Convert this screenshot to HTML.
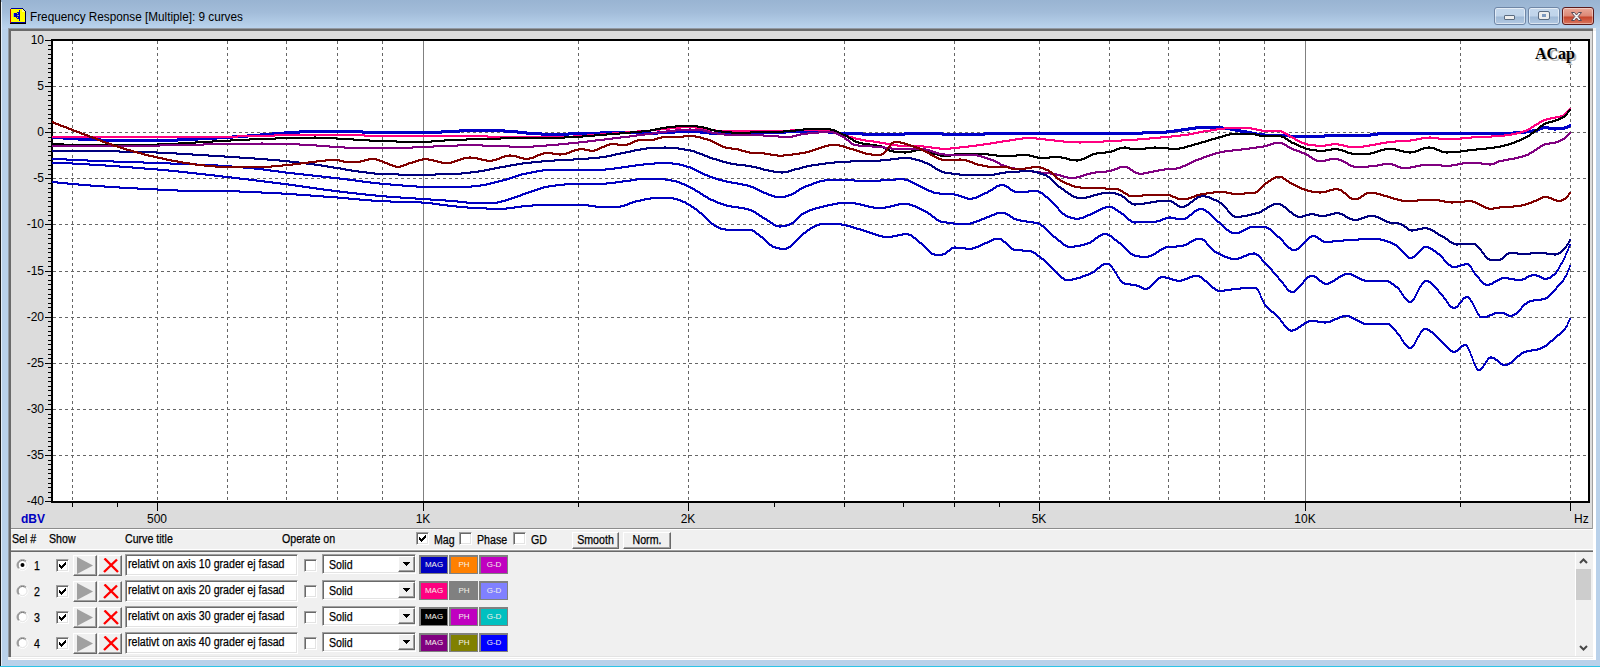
<!DOCTYPE html>
<html>
<head>
<meta charset="utf-8">
<title>Frequency Response</title>
<style>
html,body{margin:0;padding:0;}
body{width:1600px;height:667px;overflow:hidden;position:relative;background:#b9d1ea;font-family:"Liberation Sans",sans-serif;font-size:11px;color:#000;}
.abs{position:absolute;}
#titlebar{left:0;top:0;width:1600px;height:29px;background:linear-gradient(#99b4d2 0px,#a2bcd9 12px,#aec8e3 20px,#bad3ed 28px);}
#title{left:30px;top:10px;font-size:12.5px;line-height:14px;transform:scaleX(0.94);transform-origin:0 0;white-space:nowrap;color:#000;}
#client{left:8px;top:28px;width:1588px;height:632px;background:#f0f0f0;}
#panel{left:11px;top:31px;width:1581px;height:497px;background:#dcdcdc;}
.ylab{position:absolute;left:4px;width:40px;text-align:right;font-size:12px;line-height:12px;}
.xlab{position:absolute;top:513px;font-size:12px;line-height:12px;width:60px;margin-left:-30px;text-align:center;}
.t{position:absolute;white-space:nowrap;font-size:11px;line-height:12px;}
.ms{font-size:12.5px;line-height:12px;transform:scaleX(0.85);transform-origin:0 0;-webkit-text-stroke:0.25px #000;}
.chk{position:absolute;width:11px;height:11px;background:#fff;border:1px solid;border-color:#a0a0a0 #fff #fff #a0a0a0;box-shadow:inset 1px 1px 0 #696969, inset -1px -1px 0 #e3e3e3;}
.chk svg{margin:0}
.btn{position:absolute;box-sizing:border-box;background:#f0f0f0;border:1px solid;border-color:#fff #696969 #696969 #fff;box-shadow:inset -1px -1px 0 #a0a0a0, inset 1px 1px 0 #f0f0f0;}
.btn span{position:absolute;left:0;right:0;top:1px;text-align:center;font-size:12.5px;line-height:12px;transform:scaleX(0.85);-webkit-text-stroke:0.25px #000;}
.edit{position:absolute;box-sizing:border-box;background:#fff;border:1px solid;border-color:#a0a0a0 #fff #fff #a0a0a0;box-shadow:inset 1px 1px 0 #696969, inset -1px -1px 0 #e3e3e3;}
.cb{position:absolute;box-sizing:border-box;width:29px;height:19px;border:solid #808080;border-width:2px 1px 1px 2px;}
.cb span{position:absolute;left:0;right:0;top:2.5px;text-align:center;font-size:8px;line-height:9px;color:#f4f0e8;}
.wb{position:absolute;top:7px;height:18px;box-sizing:border-box;border-radius:3px;}
</style>
</head>
<body>
<div id="titlebar" class="abs"></div>
<div class="abs" style="left:0;top:0;width:1px;height:667px;background:#1a1a1a;"></div>
<div class="abs" style="left:1px;top:2px;width:1px;height:664px;background:#e4eef9;"></div>
<div class="abs" style="left:0;top:666px;width:1600px;height:1px;background:#2ec3e6;"></div>
<svg class="abs" style="left:10px;top:8px" width="16" height="16" viewBox="0 0 16 16" shape-rendering="crispEdges">
<path d="M1 1h11l3 3v10H1z" fill="#ffff00"/>
<path d="M0 1h1v14H0z" fill="#c00000"/>
<path d="M1 0h11v1H1z" fill="#0000a0"/>
<path d="M12 0h1v1h1v1h1v1h1v12h-1V4h-1V3h-1V2h-1z" fill="#000040"/>
<path d="M12 1v3h3v-1h-1v-1h-1v-1z" fill="#ffff80"/>
<path d="M1 14h14v1H1z" fill="#0000a0"/>
<path d="M0 15h16v1H0z" fill="#000"/>
<path d="M4 5h2v4H4z" fill="#0000c0"/>
<path d="M3 5h1v4H3z" fill="#b0b0b0"/>
<path d="M6 5l1-1 1-1 1-1h1v11H9l-1-1-1-1-1-1z" fill="#0000c0"/>
<path d="M8 3h1v1H8zM7 5h1v1H7zM7 9h1v1H7zM8 11h1v1H8z" fill="#ffff00"/>
<path d="M7 7h2v1H7z" fill="#9090c0"/>
</svg>
<div id="title" class="abs">Frequency Response [Multiple]: 9 curves</div>
<div class="wb" style="left:1494px;width:32px;border:1px solid #6f86a6;background:linear-gradient(#c4d7ec 0,#c0d4ea 8px,#9fb9d6 9px,#b3c9e2 16px);box-shadow:inset 0 0 0 1px rgba(255,255,255,.55)"><div class="abs" style="left:9px;top:7px;width:9px;height:3px;background:#eee;border:1px solid #5a6b80;border-radius:1px"></div></div>
<div class="wb" style="left:1528px;width:32px;border:1px solid #6f86a6;background:linear-gradient(#c4d7ec 0,#c0d4ea 8px,#9fb9d6 9px,#b3c9e2 16px);box-shadow:inset 0 0 0 1px rgba(255,255,255,.55)"><div class="abs" style="left:10px;top:4px;width:4px;height:3px;background:#7f9bc0;border:solid #eee;border-width:2px 3px 2px 3px;outline:1px solid #5a6b80;border-radius:1px"></div></div>
<div class="wb" style="left:1562px;width:32px;border:1px solid #5c1a1a;background:linear-gradient(#e9a99a 0,#dc8876 8px,#c6452b 9px,#d87660 16px);box-shadow:inset 0 0 0 1px rgba(255,255,255,.4)"><svg width="13" height="11" viewBox="0 0 13 11" style="position:absolute;left:7px;top:2.5px"><path d="M1.5 1.5h3L6.5 4l2-2.5h3L8.2 5.5l3.3 4h-3l-2-2.5-2 2.5h-3l3.3-4z" fill="#f4f4f4" stroke="#5a4a55" stroke-width="1"/></svg></div>
<div id="client" class="abs"></div>
<div class="abs" style="left:8px;top:28px;width:1585px;height:3px;background:linear-gradient(#939aa3 0,#939aa3 1px,#6a6a6a 1px,#6a6a6a 3px);"></div>
<div class="abs" style="left:8px;top:29px;width:3px;height:628px;background:linear-gradient(90deg,#939aa3 0,#939aa3 1px,#6a6a6a 1px,#6a6a6a 3px);"></div>
<div class="abs" style="left:11px;top:656px;width:1585px;height:4px;background:linear-gradient(#e3e3e3 0,#e3e3e3 1px,#fff 1px,#fff 2px,#f0f0f0 2px,#f0f0f0 3px,#fff 3px);"></div>
<div class="abs" style="left:1593px;top:31px;width:3px;height:629px;background:#fff;"></div>
<div id="panel" class="abs"></div>
<svg class="abs" style="left:0;top:0" width="1600" height="530" viewBox="0 0 1600 530" shape-rendering="crispEdges">
<rect x="51" y="39" width="1539" height="464" fill="#000"/>
<rect x="53" y="41" width="1535" height="460" fill="#fff"/>
<path d="M53 86.5H1588M53 132.5H1588M53 178.5H1588M53 224.5H1588M53 271.5H1588M53 317.5H1588M53 363.5H1588M53 409.5H1588M53 455.5H1588" stroke="#666" stroke-width="1" stroke-dasharray="3 3" stroke-dashoffset="0" fill="none"/>
<path d="M72.5 41V501M157.5 41V501M227.5 41V501M286.5 41V501M337.5 41V501M382.5 41V501M578.5 41V501M688.5 41V501M844.5 41V501M954.5 41V501M1039.5 41V501M1109.5 41V501M1168.5 41V501M1219.5 41V501M1264.5 41V501M1460.5 41V501M1570.5 41V501" stroke="#666" stroke-width="1" stroke-dasharray="3 3" stroke-dashoffset="0" fill="none"/>
<path d="M423.5 41V501M1305.5 41V501" stroke="#808080" stroke-width="1" fill="none"/>
<path d="M52 136H64V137H79V138H101V139H177V138H197V137H216V136H232V135H247V134H260V133H272V132H284V131H299V130H363V131H441V130H459V129H505V130H518V131H527V132H542V133H568V132H600V131H638V132H657V131H674V130H701V131H710V132H725V133H738V132H754V131H785V130H829V131H838V132H863V133H904V132H943V133H984V132H1142V131H1166V130H1174V129H1181V128H1188V127H1195V126H1223V127H1231V128H1236V129H1241V130H1247V131H1252V132H1257V133H1265V134H1290V135H1324V134H1370V133H1377V132H1513V131H1525V130H1532V129H1537V128H1539V127H1542V126H1549V127H1564V126H1567V125H1569V124H1571V127H1570V128H1568V129H1565V130H1556V131H1554V130H1548V129H1543V130H1540V131H1538V132H1533V133H1526V134H1514V135H1378V136H1371V137H1325V138H1289V137H1264V136H1256V135H1251V134H1246V133H1240V132H1235V131H1230V130H1222V129H1196V130H1189V131H1182V132H1175V133H1167V134H1143V135H985V136H942V135H905V136H862V135H837V134H828V133H786V134H755V135H739V136H724V135H709V134H700V133H675V134H658V135H637V134H601V135H569V136H541V135H526V134H517V133H504V132H460V133H442V134H362V133H300V134H285V135H273V136H261V137H248V138H233V139H217V140H198V141H178V142H100V141H78V140H63V139H52Z" fill="#0000c8"/>
<path d="M52 136H237V135H274V134H365V135H488V136H573V135H587V134H600V133H612V132H625V131H637V130H650V129H659V128H669V127H680V126H696V127H702V128H708V129H716V130H790V129H804V128H806V129H833V130H836V131H839V132H841V133H843V134H846V135H849V136H853V137H856V138H861V139H866V140H874V141H880V142H886V143H890V144H898V145H924V146H932V147H940V148H950V147H959V146H968V145H976V144H983V143H990V142H996V141H1002V140H1009V139H1015V138H1022V137H1037V138H1046V139H1055V140H1064V141H1103V140H1121V139H1137V138H1149V137H1160V136H1171V135H1180V134H1188V133H1193V132H1198V131H1203V130H1210V129H1216V128H1224V127H1252V128H1257V129H1262V130H1282V131H1284V132H1286V133H1288V134H1289V135H1291V136H1293V137H1295V138H1296V139H1298V140H1300V141H1302V142H1305V143H1308V144H1316V145H1325V144H1331V143H1339V144H1344V145H1348V146H1363V145H1369V144H1375V143H1380V142H1386V141H1395V140H1410V139H1416V138H1421V137H1429V136H1431V137H1439V138H1461V137H1471V136H1491V135H1504V134H1511V133H1516V132H1520V131H1523V130H1526V129H1528V128H1530V127H1531V126H1533V125H1534V124H1536V123H1538V122H1539V121H1541V120H1543V119H1546V118H1550V117H1555V116H1560V115H1563V114H1564V113H1565V112H1566V111H1567V110H1568V109H1569V108H1571V110H1570V111H1569V112H1568V113H1567V114H1566V115H1565V116H1564V117H1561V118H1556V119H1551V120H1547V121H1544V122H1542V123H1540V124H1539V125H1537V126H1535V127H1534V128H1532V129H1531V130H1529V131H1527V132H1524V133H1521V134H1517V135H1512V136H1505V137H1492V138H1472V139H1462V140H1438V139H1422V140H1417V141H1411V142H1396V143H1387V144H1381V145H1376V146H1370V147H1364V148H1347V147H1343V146H1338V145H1332V146H1326V147H1315V146H1307V145H1304V144H1301V143H1299V142H1297V141H1295V140H1294V139H1292V138H1290V137H1288V136H1287V135H1285V134H1283V133H1281V132H1261V131H1256V130H1251V129H1225V130H1217V131H1211V132H1204V133H1199V134H1194V135H1189V136H1181V137H1172V138H1161V139H1150V140H1138V141H1122V142H1104V143H1081V144H1079V143H1063V142H1054V141H1045V140H1036V139H1023V140H1016V141H1010V142H1003V143H997V144H991V145H984V146H977V147H969V148H960V149H951V150H939V149H931V148H923V147H897V146H889V145H885V144H879V143H873V142H865V141H860V140H855V139H852V138H848V137H845V136H842V135H840V134H838V133H835V132H832V131H791V132H715V131H707V130H701V129H695V128H681V129H670V130H660V131H651V132H638V133H626V134H613V135H601V136H588V137H574V138H487V137H364V136H275V137H238V138H52Z" fill="#ff0080"/>
<path d="M52 143H64V144H157V143H178V142H195V141H212V140H230V139H249V138H275V137H314V136H316V137H337V138H354V139H370V140H397V141H431V140H444V139H466V138H500V137H564V136H582V135H594V134H606V133H619V132H630V131H641V130H650V129H655V128H660V127H666V126H675V125H698V126H704V127H708V128H711V129H715V130H722V131H732V132H750V131H783V130H795V129H803V128H831V129H835V130H837V131H839V132H841V133H843V134H846V135H848V136H849V137H851V138H853V139H854V140H856V141H859V142H863V143H870V144H877V145H882V146H884V147H886V148H888V149H890V150H894V151H911V150H915V149H925V150H928V151H931V152H934V153H938V154H941V155H950V154H954V153H989V154H997V155H1016V154H1030V155H1034V156H1038V157H1049V156H1062V157H1067V158H1070V159H1081V158H1084V157H1086V156H1088V155H1090V154H1092V153H1096V152H1105V151H1111V150H1114V149H1116V148H1119V147H1124V146H1126V147H1130V148H1145V147H1154V146H1156V147H1169V148H1179V147H1184V146H1187V145H1191V144H1194V143H1198V142H1201V141H1205V140H1208V139H1211V138H1215V137H1218V136H1222V135H1225V134H1229V133H1256V134H1260V135H1282V136H1285V137H1286V138H1288V139H1289V140H1291V141H1292V142H1295V143H1297V144H1299V145H1301V146H1304V147H1306V148H1310V149H1317V150H1325V149H1331V148H1339V149H1343V150H1346V151H1348V152H1352V153H1370V152H1374V151H1377V150H1380V149H1384V148H1396V149H1400V150H1404V151H1415V150H1418V149H1420V148H1423V147H1428V146H1430V147H1435V148H1437V149H1440V150H1442V151H1460V150H1467V149H1476V148H1486V147H1494V146H1500V145H1504V144H1508V143H1511V142H1514V141H1516V140H1519V139H1521V138H1523V137H1525V136H1527V135H1529V134H1530V133H1531V132H1533V131H1534V130H1535V129H1537V128H1538V127H1539V126H1540V125H1542V124H1543V123H1545V122H1548V121H1552V120H1555V119H1558V118H1560V117H1562V116H1564V115H1565V114H1566V113H1567V111H1568V110H1569V109H1571V111H1570V112H1569V113H1568V115H1567V116H1566V117H1565V118H1563V119H1561V120H1559V121H1556V122H1553V123H1549V124H1546V125H1544V126H1543V127H1541V128H1540V129H1539V130H1538V131H1536V132H1535V133H1534V134H1532V135H1531V136H1530V137H1528V138H1526V139H1524V140H1522V141H1520V142H1517V143H1515V144H1512V145H1509V146H1505V147H1501V148H1495V149H1487V150H1477V151H1468V152H1461V153H1448V154H1446V153H1441V152H1439V151H1436V150H1434V149H1424V150H1421V151H1419V152H1416V153H1411V154H1409V153H1403V152H1399V151H1395V150H1385V151H1381V152H1378V153H1375V154H1371V155H1351V154H1347V153H1345V152H1342V151H1338V150H1332V151H1326V152H1316V151H1309V150H1305V149H1303V148H1300V147H1298V146H1296V145H1294V144H1291V143H1290V142H1288V141H1287V140H1285V139H1284V138H1281V137H1259V136H1255V135H1230V136H1226V137H1223V138H1219V139H1216V140H1212V141H1209V142H1206V143H1202V144H1199V145H1195V146H1192V147H1188V148H1185V149H1180V150H1168V149H1146V150H1129V149H1120V150H1117V151H1115V152H1112V153H1106V154H1097V155H1093V156H1091V157H1089V158H1087V159H1085V160H1082V161H1078V162H1076V161H1069V160H1066V159H1061V158H1050V159H1037V158H1033V157H1029V156H1017V157H996V156H988V155H955V156H951V157H940V156H937V155H933V154H930V153H927V152H924V151H916V152H912V153H906V154H904V153H893V152H889V151H887V150H885V149H883V148H881V147H876V146H869V145H862V144H858V143H855V142H853V141H852V140H850V139H848V138H847V137H845V136H842V135H840V134H838V133H836V132H834V131H830V130H804V131H796V132H784V133H751V134H731V133H721V132H714V131H710V130H707V129H703V128H697V127H676V128H667V129H661V130H656V131H651V132H642V133H631V134H620V135H607V136H595V137H583V138H565V139H501V140H467V141H445V142H432V143H396V142H369V141H353V140H336V139H276V140H250V141H231V142H213V143H196V144H179V145H158V146H63V145H52Z" fill="#000000"/>
<path d="M52 145H159V144H203V143H261V142H263V143H300V144H317V145H330V146H345V147H412V146H433V145H457V144H483V145H510V146H533V145H546V144H558V143H568V142H578V141H587V140H595V139H604V138H612V137H620V136H629V135H636V134H644V133H652V132H659V131H666V130H675V129H689V128H691V129H704V130H708V131H712V132H718V133H725V134H764V135H779V136H792V135H796V134H800V133H807V132H818V131H834V132H837V133H839V134H841V135H843V136H845V137H846V138H847V139H849V140H850V141H851V142H852V143H854V144H859V145H873V146H885V147H892V148H926V149H930V150H933V151H936V152H939V153H945V154H978V155H982V156H985V157H988V158H991V159H994V160H996V161H998V162H1000V163H1001V164H1004V165H1007V166H1010V167H1015V168H1020V169H1026V170H1033V171H1041V172H1051V173H1057V174H1061V175H1064V176H1068V177H1076V176H1080V175H1083V174H1086V173H1090V172H1095V171H1106V170H1111V169H1114V168H1117V167H1119V166H1128V167H1130V168H1131V169H1133V170H1134V171H1136V172H1139V173H1143V172H1148V171H1153V170H1158V169H1164V168H1176V167H1180V166H1182V165H1185V164H1187V163H1189V162H1191V161H1193V160H1195V159H1198V158H1201V157H1203V156H1206V155H1209V154H1212V153H1215V152H1219V151H1224V150H1232V149H1241V148H1249V147H1256V146H1263V145H1267V144H1270V143H1273V142H1283V143H1285V144H1287V145H1288V146H1290V147H1292V148H1294V149H1297V150H1300V151H1302V152H1305V153H1307V154H1309V155H1310V156H1312V157H1313V158H1315V159H1317V160H1325V159H1329V158H1339V159H1342V160H1344V161H1346V162H1348V163H1349V164H1351V165H1354V166H1368V165H1377V164H1382V163H1393V164H1396V165H1398V166H1401V167H1410V166H1415V165H1420V164H1442V165H1451V164H1457V163H1462V162H1482V163H1494V162H1496V161H1498V160H1503V159H1508V158H1514V157H1518V156H1522V155H1525V154H1528V153H1529V152H1531V151H1533V150H1534V149H1536V148H1537V147H1539V146H1540V145H1542V144H1544V143H1549V142H1555V141H1558V140H1560V139H1562V138H1564V137H1565V136H1566V135H1567V134H1568V133H1569V132H1571V134H1570V135H1569V136H1568V137H1567V138H1566V139H1565V140H1563V141H1561V142H1559V143H1556V144H1550V145H1545V146H1543V147H1541V148H1540V149H1538V150H1537V151H1535V152H1534V153H1532V154H1530V155H1529V156H1526V157H1523V158H1519V159H1515V160H1509V161H1504V162H1499V163H1497V164H1495V165H1491V166H1489V165H1481V164H1463V165H1458V166H1452V167H1441V166H1421V167H1416V168H1411V169H1400V168H1397V167H1395V166H1392V165H1383V166H1378V167H1369V168H1353V167H1350V166H1348V165H1347V164H1345V163H1343V162H1341V161H1338V160H1330V161H1326V162H1316V161H1314V160H1312V159H1311V158H1309V157H1308V156H1306V155H1304V154H1301V153H1299V152H1296V151H1293V150H1291V149H1289V148H1287V147H1286V146H1284V145H1282V144H1274V145H1271V146H1268V147H1264V148H1257V149H1250V150H1242V151H1233V152H1225V153H1220V154H1216V155H1213V156H1210V157H1207V158H1204V159H1202V160H1199V161H1196V162H1194V163H1192V164H1190V165H1188V166H1186V167H1183V168H1181V169H1177V170H1165V171H1159V172H1154V173H1149V174H1144V175H1138V174H1135V173H1133V172H1132V171H1130V170H1129V169H1127V168H1120V169H1118V170H1115V171H1112V172H1107V173H1096V174H1091V175H1087V176H1084V177H1081V178H1077V179H1067V178H1063V177H1060V176H1056V175H1050V174H1040V173H1032V172H1025V171H1019V170H1014V169H1009V168H1006V167H1003V166H1000V165H999V164H997V163H995V162H993V161H990V160H987V159H984V158H981V157H977V156H944V155H938V154H935V153H932V152H929V151H925V150H891V149H884V148H872V147H858V146H853V145H851V144H850V143H849V142H848V141H846V140H845V139H844V138H842V137H840V136H838V135H836V134H833V133H819V134H808V135H801V136H797V137H793V138H778V137H763V136H724V135H717V134H711V133H707V132H703V131H676V132H667V133H660V134H653V135H645V136H637V137H630V138H621V139H613V140H605V141H596V142H588V143H579V144H569V145H559V146H547V147H534V148H509V147H482V146H458V147H434V148H413V149H344V148H329V147H316V146H299V145H204V146H160V147H52Z" fill="#800080"/>
<path d="M52 150H120V151H157V152H177V153H193V154H209V155H225V156H240V157H255V158H268V159H280V160H290V161H299V162H307V163H315V164H322V165H328V166H334V167H341V168H346V169H352V170H359V171H367V172H375V173H399V174H435V173H461V172H470V171H478V170H484V169H489V168H494V167H499V166H505V165H510V164H516V163H522V162H531V161H541V160H554V159H573V158H588V157H599V156H606V155H611V154H615V153H620V152H625V151H630V150H634V149H640V148H646V147H664V146H666V147H679V148H685V149H691V150H695V151H697V152H700V153H703V154H705V155H708V156H710V157H713V158H717V159H720V160H723V161H727V162H731V163H737V164H746V165H752V166H757V167H761V168H764V169H769V170H774V171H788V170H791V169H794V168H799V167H802V166H806V165H811V164H818V163H825V162H834V161H850V160H880V159H890V158H898V157H912V158H916V159H920V160H923V161H925V162H928V163H930V164H932V165H933V166H935V167H936V168H938V169H940V170H942V171H945V172H952V173H960V174H994V173H999V172H1005V171H1019V170H1034V171H1038V172H1041V173H1044V174H1047V175H1048V176H1050V177H1051V178H1052V179H1053V180H1054V181H1055V182H1056V183H1057V184H1058V185H1059V186H1061V187H1062V188H1064V189H1065V190H1066V191H1068V192H1069V193H1071V194H1072V195H1074V196H1077V197H1086V196H1090V195H1093V194H1097V193H1101V192H1116V193H1119V194H1122V195H1123V196H1125V197H1126V198H1127V199H1128V200H1129V201H1131V202H1132V203H1144V202H1150V201H1156V200H1172V201H1174V202H1175V203H1177V204H1178V205H1180V206H1184V205H1186V204H1188V203H1189V202H1190V201H1192V200H1193V199H1194V198H1196V197H1197V196H1200V195H1206V196H1210V197H1212V198H1214V199H1217V200H1219V201H1220V202H1222V203H1223V204H1224V205H1225V206H1226V207H1227V208H1228V210H1229V211H1230V212H1231V213H1232V214H1233V215H1235V216H1241V215H1247V214H1251V213H1255V212H1259V211H1261V210H1262V209H1264V208H1266V207H1267V206H1269V205H1271V204H1273V203H1281V204H1283V205H1284V206H1286V207H1287V208H1288V209H1289V210H1290V211H1292V212H1293V213H1294V214H1296V215H1298V216H1302V215H1305V214H1309V213H1315V214H1319V215H1326V214H1330V213H1334V212H1340V213H1343V214H1345V215H1346V216H1348V217H1350V218H1353V219H1358V218H1361V217H1364V216H1367V215H1376V216H1379V217H1381V218H1383V219H1385V220H1387V221H1390V222H1399V223H1402V224H1404V225H1405V226H1407V227H1408V228H1409V229H1417V228H1422V227H1428V228H1431V229H1433V230H1435V231H1436V232H1438V233H1439V234H1441V235H1443V236H1445V237H1446V238H1448V239H1449V240H1450V241H1452V242H1454V243H1476V244H1477V245H1478V246H1479V247H1480V248H1481V249H1482V251H1483V252H1484V253H1485V255H1486V256H1487V257H1488V258H1490V259H1500V258H1502V257H1503V256H1504V255H1505V254H1506V253H1508V252H1518V253H1530V252H1547V253H1558V252H1560V251H1561V250H1562V249H1563V248H1564V247H1565V246H1566V244H1567V243H1568V241H1569V239H1571V241H1570V243H1569V245H1568V246H1567V248H1566V249H1565V250H1564V251H1563V252H1562V253H1561V254H1559V255H1556V256H1554V255H1546V254H1531V255H1517V254H1509V255H1507V256H1506V257H1505V258H1504V259H1503V260H1501V261H1489V260H1487V259H1486V258H1485V257H1484V255H1483V254H1482V253H1481V251H1480V250H1479V249H1478V248H1477V247H1476V246H1475V245H1458V246H1456V245H1453V244H1451V243H1449V242H1448V241H1447V240H1445V239H1444V238H1442V237H1440V236H1438V235H1437V234H1435V233H1434V232H1432V231H1430V230H1427V229H1423V230H1418V231H1413V232H1411V231H1408V230H1407V229H1406V228H1404V227H1403V226H1401V225H1398V224H1389V223H1386V222H1384V221H1382V220H1380V219H1378V218H1375V217H1368V218H1365V219H1362V220H1359V221H1352V220H1349V219H1347V218H1345V217H1344V216H1342V215H1339V214H1335V215H1331V216H1327V217H1318V216H1314V215H1310V216H1306V217H1303V218H1297V217H1295V216H1293V215H1292V214H1291V213H1289V212H1288V211H1287V210H1286V209H1285V208H1283V207H1282V206H1280V205H1274V206H1272V207H1270V208H1268V209H1267V210H1265V211H1263V212H1262V213H1260V214H1256V215H1252V216H1248V217H1242V218H1234V217H1232V216H1231V215H1230V214H1229V213H1228V212H1227V210H1226V209H1225V208H1224V207H1223V206H1222V205H1221V204H1219V203H1218V202H1216V201H1213V200H1211V199H1209V198H1205V197H1201V198H1198V199H1197V200H1195V201H1194V202H1193V203H1191V204H1190V205H1189V206H1187V207H1185V208H1179V207H1177V206H1176V205H1174V204H1173V203H1171V202H1157V203H1151V204H1145V205H1136V206H1134V205H1131V204H1130V203H1128V202H1127V201H1126V200H1125V199H1124V198H1122V197H1121V196H1118V195H1115V194H1102V195H1098V196H1094V197H1091V198H1087V199H1076V198H1073V197H1071V196H1070V195H1068V194H1067V193H1065V192H1064V191H1063V190H1061V189H1060V188H1058V187H1057V186H1056V185H1055V184H1054V183H1053V182H1052V181H1051V180H1050V179H1049V178H1047V177H1046V176H1043V175H1040V174H1037V173H1033V172H1020V173H1006V174H1000V175H995V176H959V175H951V174H944V173H941V172H939V171H937V170H935V169H934V168H932V167H931V166H929V165H927V164H924V163H922V162H919V161H915V160H911V159H899V160H891V161H881V162H851V163H835V164H826V165H819V166H812V167H807V168H803V169H800V170H795V171H792V172H789V173H783V174H781V173H773V172H768V171H763V170H760V169H756V168H751V167H745V166H736V165H730V164H726V163H722V162H719V161H716V160H712V159H709V158H707V157H704V156H702V155H699V154H696V153H694V152H690V151H684V150H678V149H647V150H641V151H635V152H631V153H626V154H621V155H616V156H612V157H607V158H600V159H589V160H574V161H555V162H542V163H532V164H523V165H517V166H511V167H506V168H500V169H495V170H490V171H485V172H479V173H471V174H462V175H436V176H398V175H374V174H366V173H358V172H351V171H345V170H340V169H333V168H327V167H321V166H314V165H306V164H298V163H289V162H279V161H267V160H254V159H239V158H224V157H208V156H192V155H176V154H156V153H119V152H52Z" fill="#000080"/>
<path d="M52 158H67V159H88V160H114V161H144V162H171V163H197V164H218V165H232V166H244V167H255V168H264V169H271V170H279V171H286V172H295V173H304V174H313V175H322V176H331V177H340V178H348V179H356V180H363V181H371V182H380V183H391V184H403V185H417V186H471V185H480V184H486V183H490V182H494V181H498V180H502V179H506V178H509V177H512V176H515V175H518V174H521V173H526V172H531V171H536V170H542V169H605V168H614V167H621V166H628V165H635V164H643V163H654V162H673V163H680V164H684V165H687V166H691V167H693V168H695V169H697V170H699V171H701V172H703V173H705V174H708V175H710V176H713V177H716V178H719V179H723V180H727V181H732V182H738V183H743V184H748V185H751V186H754V187H756V188H758V189H760V190H762V191H764V192H767V193H769V194H772V195H775V196H785V195H788V194H791V193H793V192H795V191H796V190H798V189H799V188H801V187H803V186H805V185H808V184H811V183H813V182H816V181H819V180H824V179H855V180H880V179H895V178H905V179H909V180H911V181H913V182H915V183H917V184H919V185H921V186H923V187H925V188H927V189H929V190H932V191H934V192H940V193H955V194H959V195H962V196H965V197H968V198H972V197H976V196H978V195H980V194H982V193H984V192H987V191H988V190H990V189H992V188H993V187H995V186H996V185H999V184H1005V185H1007V186H1009V187H1010V188H1011V189H1013V190H1015V191H1028V190H1039V191H1041V192H1043V193H1044V194H1045V195H1046V196H1048V197H1049V198H1050V199H1051V200H1052V201H1053V202H1054V203H1055V204H1056V205H1057V206H1058V207H1059V209H1060V210H1061V211H1062V212H1063V213H1065V214H1066V215H1068V216H1071V217H1075V218H1079V217H1083V216H1085V215H1087V214H1090V213H1092V212H1094V211H1096V210H1098V209H1100V208H1102V207H1105V206H1113V207H1115V208H1116V209H1118V210H1119V211H1121V212H1122V213H1124V214H1125V215H1126V216H1127V217H1128V218H1129V219H1131V220H1132V221H1156V220H1160V219H1162V218H1165V217H1169V216H1171V217H1176V218H1185V217H1187V216H1188V215H1189V214H1191V213H1192V212H1193V211H1194V210H1196V209H1198V208H1204V209H1206V210H1207V211H1209V212H1210V213H1211V214H1212V215H1213V216H1214V217H1215V218H1216V219H1217V220H1218V221H1220V222H1221V223H1222V224H1223V225H1224V226H1225V227H1226V228H1227V229H1229V230H1230V231H1232V232H1239V231H1241V230H1243V229H1245V228H1247V227H1249V226H1267V227H1269V228H1271V229H1272V230H1273V231H1274V232H1275V233H1276V234H1277V235H1278V236H1280V237H1281V238H1282V239H1283V240H1284V242H1285V243H1286V244H1287V245H1288V246H1289V247H1291V248H1292V249H1296V248H1298V247H1299V246H1300V245H1301V244H1302V243H1303V242H1304V241H1305V240H1306V239H1307V238H1308V237H1309V236H1311V235H1316V236H1318V237H1319V238H1321V239H1322V240H1324V241H1332V240H1343V239H1358V238H1381V239H1385V240H1388V241H1391V242H1393V243H1395V244H1397V245H1398V246H1399V247H1400V248H1401V249H1402V250H1403V251H1404V252H1405V253H1406V254H1407V255H1408V256H1409V257H1412V256H1414V255H1415V254H1416V253H1417V252H1418V251H1419V250H1420V249H1421V248H1422V247H1423V246H1429V247H1431V248H1433V249H1434V250H1436V251H1437V252H1438V253H1440V254H1441V255H1442V256H1443V257H1444V259H1445V260H1446V261H1447V262H1448V263H1449V264H1451V265H1452V266H1457V265H1460V264H1464V263H1469V264H1470V265H1471V266H1472V268H1473V270H1474V271H1475V273H1476V274H1477V275H1478V276H1479V277H1480V279H1481V280H1482V281H1483V282H1484V283H1486V284H1489V283H1492V282H1493V281H1495V280H1497V279H1499V278H1501V277H1509V278H1515V279H1522V278H1525V277H1526V276H1528V275H1531V274H1537V275H1540V276H1542V277H1544V278H1547V277H1550V276H1551V275H1552V274H1554V273H1555V272H1556V270H1557V269H1558V267H1559V265H1560V263H1561V262H1562V260H1563V258H1564V256H1565V253H1566V251H1567V249H1568V246H1569V244H1571V246H1570V248H1569V251H1568V253H1567V255H1566V258H1565V260H1564V262H1563V264H1562V265H1561V267H1560V269H1559V271H1558V272H1557V274H1556V275H1555V276H1553V277H1552V278H1551V279H1548V280H1543V279H1541V278H1539V277H1536V276H1532V277H1529V278H1527V279H1526V280H1523V281H1514V280H1508V279H1502V280H1500V281H1498V282H1496V283H1494V284H1493V285H1490V286H1485V285H1483V284H1482V283H1481V282H1480V281H1479V279H1478V278H1477V277H1476V276H1475V275H1474V273H1473V272H1472V270H1471V268H1470V267H1469V266H1468V265H1465V266H1461V267H1458V268H1451V267H1450V266H1448V265H1447V264H1446V263H1445V262H1444V261H1443V259H1442V258H1441V257H1440V256H1439V255H1437V254H1436V253H1435V252H1433V251H1432V250H1430V249H1428V248H1424V249H1423V250H1422V251H1421V252H1420V253H1419V254H1418V255H1417V256H1416V257H1415V258H1413V259H1408V258H1407V257H1406V256H1405V255H1404V254H1403V253H1402V252H1401V251H1400V250H1399V249H1398V248H1397V247H1396V246H1394V245H1392V244H1390V243H1387V242H1384V241H1380V240H1359V241H1344V242H1333V243H1323V242H1321V241H1320V240H1318V239H1317V238H1315V237H1312V238H1310V239H1309V240H1308V241H1307V242H1306V243H1305V244H1304V245H1303V246H1302V247H1301V248H1300V249H1299V250H1297V251H1291V250H1290V249H1288V248H1287V247H1286V246H1285V245H1284V244H1283V242H1282V241H1281V240H1280V239H1279V238H1277V237H1276V236H1275V235H1274V234H1273V233H1272V232H1271V231H1270V230H1268V229H1266V228H1250V229H1248V230H1246V231H1244V232H1242V233H1240V234H1231V233H1229V232H1228V231H1226V230H1225V229H1224V228H1223V227H1222V226H1221V225H1220V224H1219V223H1217V222H1216V221H1215V220H1214V219H1213V218H1212V217H1211V216H1210V215H1209V214H1208V213H1206V212H1205V211H1203V210H1199V211H1197V212H1195V213H1194V214H1193V215H1192V216H1190V217H1189V218H1188V219H1186V220H1175V219H1166V220H1163V221H1161V222H1157V223H1136V224H1134V223H1131V222H1130V221H1128V220H1127V219H1126V218H1125V217H1124V216H1123V215H1121V214H1120V213H1118V212H1117V211H1115V210H1114V209H1112V208H1106V209H1103V210H1101V211H1099V212H1097V213H1095V214H1093V215H1091V216H1088V217H1086V218H1084V219H1080V220H1074V219H1070V218H1067V217H1065V216H1064V215H1062V214H1061V213H1060V212H1059V211H1058V209H1057V208H1056V207H1055V206H1054V205H1053V204H1052V203H1051V202H1050V201H1049V200H1048V199H1047V198H1045V197H1044V196H1043V195H1042V194H1040V193H1038V192H1029V193H1014V192H1012V191H1010V190H1009V189H1008V188H1006V187H1004V186H1000V187H997V188H996V189H994V190H993V191H991V192H989V193H988V194H985V195H983V196H981V197H979V198H977V199H973V200H967V199H964V198H961V197H958V196H954V195H939V194H933V193H931V192H928V191H926V190H924V189H922V188H920V187H918V186H916V185H914V184H912V183H910V182H908V181H904V180H896V181H881V182H854V181H825V182H820V183H817V184H814V185H812V186H809V187H806V188H804V189H802V190H800V191H799V192H797V193H796V194H794V195H792V196H789V197H786V198H774V197H771V196H768V195H766V194H763V193H761V192H759V191H757V190H755V189H753V188H750V187H747V186H742V185H737V184H731V183H726V182H722V181H718V180H715V179H712V178H709V177H707V176H704V175H702V174H700V173H698V172H696V171H694V170H692V169H690V168H686V167H683V166H679V165H672V164H655V165H644V166H636V167H629V168H622V169H615V170H606V171H543V172H537V173H532V174H527V175H522V176H519V177H516V178H513V179H510V180H507V181H503V182H499V183H495V184H491V185H487V186H481V187H472V188H416V187H402V186H390V185H379V184H370V183H362V182H355V181H347V180H339V179H330V178H321V177H312V176H303V175H294V174H285V173H278V172H270V171H263V170H254V169H243V168H231V167H217V166H196V165H170V164H143V163H113V162H87V161H66V160H52Z" fill="#0000c0"/>
<path d="M52 162H73V163H90V164H106V165H120V166H133V167H145V168H158V169H169V170H179V171H188V172H197V173H206V174H215V175H223V176H232V177H240V178H249V179H257V180H265V181H273V182H281V183H289V184H296V185H303V186H310V187H317V188H324V189H332V190H340V191H348V192H357V193H366V194H376V195H387V196H401V197H416V198H431V199H446V200H458V201H467V202H497V201H501V200H505V199H508V198H511V197H514V196H517V195H520V194H522V193H525V192H528V191H531V190H534V189H537V188H540V187H543V186H548V185H555V184H564V183H606V182H615V181H622V180H630V179H636V178H666V179H672V180H677V181H680V182H682V183H685V184H687V185H689V186H691V187H693V188H695V189H696V190H698V191H700V192H701V193H703V194H704V195H706V196H708V197H709V198H711V199H714V200H716V201H718V202H721V203H724V204H727V205H732V206H739V207H745V208H749V209H752V210H754V211H756V212H757V213H759V214H760V215H762V216H763V217H765V218H767V219H768V220H770V221H771V222H773V223H774V224H776V225H786V224H789V223H791V222H793V221H794V220H795V219H796V218H797V217H798V216H799V215H800V214H801V213H803V212H805V211H807V210H809V209H812V208H815V207H819V206H823V205H827V204H832V203H837V202H856V203H861V204H865V205H869V206H874V207H885V206H890V205H894V204H898V203H910V204H913V205H916V206H918V207H920V208H922V209H924V210H926V211H928V212H929V213H931V214H932V215H933V216H935V217H936V218H937V219H939V220H941V221H947V222H954V223H970V222H973V221H976V220H979V219H981V218H984V217H986V216H989V215H991V214H994V213H996V212H1006V213H1008V214H1010V215H1011V216H1013V217H1014V218H1017V219H1021V220H1027V221H1034V222H1039V223H1041V224H1042V225H1044V226H1045V227H1046V228H1047V229H1048V230H1049V231H1050V232H1051V233H1052V234H1053V235H1054V236H1056V237H1057V238H1058V239H1059V240H1061V241H1062V242H1063V243H1064V244H1066V245H1068V246H1074V245H1080V244H1084V243H1087V242H1090V241H1091V240H1093V239H1094V238H1095V237H1097V236H1098V235H1100V234H1102V233H1108V234H1110V235H1112V236H1113V237H1114V238H1115V239H1117V240H1118V241H1119V242H1121V243H1122V244H1123V245H1124V246H1125V247H1126V248H1127V249H1128V250H1129V251H1130V252H1131V253H1133V254H1135V255H1140V256H1148V255H1151V254H1153V253H1155V252H1156V251H1158V250H1159V249H1161V248H1163V247H1165V246H1176V245H1183V244H1186V243H1188V242H1189V241H1191V240H1193V239H1195V238H1203V239H1205V240H1206V241H1207V243H1208V244H1209V245H1210V246H1211V247H1212V248H1213V249H1214V250H1215V251H1217V252H1219V253H1221V254H1223V255H1225V256H1228V257H1231V258H1238V257H1241V256H1243V255H1246V254H1248V253H1253V252H1255V253H1257V254H1259V255H1260V256H1261V257H1262V259H1263V260H1264V261H1265V262H1266V263H1267V264H1268V265H1269V266H1270V267H1271V268H1272V269H1273V271H1274V272H1275V273H1276V274H1277V275H1278V276H1279V278H1280V279H1281V280H1282V281H1283V282H1284V284H1285V285H1286V286H1287V288H1288V289H1289V290H1291V291H1294V290H1295V289H1296V288H1297V287H1298V286H1299V285H1300V284H1301V283H1302V282H1303V280H1304V279H1305V278H1306V277H1307V276H1309V275H1315V276H1317V277H1318V278H1319V279H1320V280H1322V281H1323V282H1325V283H1328V282H1330V281H1332V280H1334V279H1335V278H1337V277H1338V276H1340V275H1342V274H1344V273H1352V274H1354V275H1356V276H1358V277H1360V278H1362V279H1365V280H1389V281H1391V282H1392V283H1394V284H1395V285H1396V286H1398V287H1399V288H1400V290H1401V291H1402V293H1403V294H1404V296H1405V297H1406V298H1407V299H1408V300H1409V301H1411V300H1412V299H1413V298H1414V296H1415V294H1416V292H1417V290H1418V288H1419V286H1420V285H1421V283H1422V282H1423V281H1424V280H1429V281H1431V282H1432V283H1433V284H1434V285H1435V286H1436V287H1437V288H1438V289H1439V291H1440V292H1441V293H1442V294H1443V295H1444V297H1445V298H1446V299H1447V301H1448V302H1449V304H1450V305H1451V306H1453V307H1455V306H1457V305H1458V303H1459V302H1460V301H1461V300H1462V298H1463V297H1465V296H1469V297H1470V298H1471V300H1472V301H1473V303H1474V305H1475V307H1476V309H1477V311H1478V313H1479V314H1480V316H1487V315H1489V314H1492V313H1494V312H1505V313H1507V314H1509V315H1512V314H1514V313H1516V312H1517V311H1518V310H1519V309H1520V308H1521V306H1522V305H1523V304H1524V303H1526V302H1527V301H1529V300H1533V299H1541V298H1545V297H1547V296H1548V295H1549V294H1550V293H1551V292H1552V291H1553V290H1554V289H1555V288H1556V286H1557V285H1558V284H1559V283H1560V282H1561V281H1562V280H1563V278H1564V276H1565V275H1566V273H1567V270H1568V268H1569V265H1571V267H1570V270H1569V272H1568V275H1567V277H1566V278H1565V280H1564V282H1563V283H1562V284H1561V285H1560V286H1559V287H1558V288H1557V290H1556V291H1555V292H1554V293H1553V294H1552V295H1551V296H1550V297H1549V298H1548V299H1546V300H1542V301H1534V302H1530V303H1528V304H1527V305H1525V306H1524V307H1523V308H1522V310H1521V311H1520V312H1519V313H1518V314H1517V315H1515V316H1513V317H1508V316H1506V315H1504V314H1495V315H1493V316H1490V317H1488V318H1479V316H1478V315H1477V313H1476V311H1475V309H1474V307H1473V305H1472V303H1471V302H1470V300H1469V299H1468V298H1466V299H1464V300H1463V302H1462V303H1461V304H1460V305H1459V307H1458V308H1456V309H1452V308H1450V307H1449V306H1448V304H1447V303H1446V301H1445V300H1444V299H1443V297H1442V296H1441V295H1440V294H1439V293H1438V291H1437V290H1436V289H1435V288H1434V287H1433V286H1432V285H1431V284H1430V283H1428V282H1425V283H1424V284H1423V285H1422V287H1421V288H1420V290H1419V292H1418V294H1417V296H1416V298H1415V300H1414V301H1413V302H1412V303H1408V302H1407V301H1406V300H1405V299H1404V298H1403V296H1402V295H1401V293H1400V292H1399V290H1398V289H1397V288H1395V287H1394V286H1393V285H1391V284H1390V283H1388V282H1364V281H1361V280H1359V279H1357V278H1355V277H1353V276H1351V275H1345V276H1343V277H1341V278H1339V279H1338V280H1336V281H1335V282H1333V283H1331V284H1329V285H1324V284H1322V283H1321V282H1319V281H1318V280H1317V279H1316V278H1314V277H1310V278H1308V279H1307V280H1306V281H1305V282H1304V284H1303V285H1302V286H1301V287H1300V288H1299V289H1298V290H1297V291H1296V292H1295V293H1290V292H1288V291H1287V290H1286V288H1285V287H1284V286H1283V284H1282V283H1281V282H1280V281H1279V280H1278V278H1277V277H1276V276H1275V275H1274V274H1273V273H1272V271H1271V270H1270V269H1269V268H1268V267H1267V266H1266V265H1265V264H1264V263H1263V262H1262V261H1261V259H1260V258H1259V257H1258V256H1256V255H1249V256H1247V257H1244V258H1242V259H1239V260H1230V259H1227V258H1224V257H1222V256H1220V255H1218V254H1216V253H1214V252H1213V251H1212V250H1211V249H1210V248H1209V247H1208V246H1207V245H1206V243H1205V242H1204V241H1202V240H1196V241H1194V242H1192V243H1190V244H1189V245H1187V246H1184V247H1177V248H1166V249H1164V250H1162V251H1160V252H1159V253H1157V254H1156V255H1154V256H1152V257H1149V258H1139V257H1134V256H1132V255H1130V254H1129V253H1128V252H1127V251H1126V250H1125V249H1124V248H1123V247H1122V246H1121V245H1120V244H1118V243H1117V242H1116V241H1114V240H1113V239H1112V238H1111V237H1109V236H1107V235H1103V236H1101V237H1099V238H1098V239H1096V240H1095V241H1094V242H1092V243H1091V244H1088V245H1085V246H1081V247H1075V248H1067V247H1065V246H1063V245H1062V244H1061V243H1060V242H1058V241H1057V240H1056V239H1055V238H1053V237H1052V236H1051V235H1050V234H1049V233H1048V232H1047V231H1046V230H1045V229H1044V228H1043V227H1041V226H1040V225H1038V224H1033V223H1026V222H1020V221H1016V220H1013V219H1012V218H1010V217H1009V216H1007V215H1005V214H997V215H995V216H992V217H990V218H987V219H985V220H982V221H980V222H977V223H974V224H971V225H953V224H946V223H940V222H938V221H936V220H935V219H934V218H932V217H931V216H930V215H928V214H927V213H925V212H923V211H921V210H919V209H917V208H915V207H912V206H909V205H899V206H895V207H891V208H886V209H873V208H868V207H864V206H860V205H855V204H838V205H833V206H828V207H824V208H820V209H816V210H813V211H810V212H808V213H806V214H804V215H802V216H801V217H800V218H799V219H798V220H797V221H796V222H795V223H794V224H792V225H790V226H787V227H781V228H779V227H775V226H773V225H772V224H770V223H769V222H767V221H766V220H764V219H762V218H761V217H759V216H758V215H756V214H755V213H753V212H751V211H748V210H744V209H738V208H731V207H726V206H723V205H720V204H717V203H715V202H713V201H710V200H708V199H707V198H705V197H703V196H702V195H700V194H699V193H697V192H695V191H694V190H692V189H690V188H688V187H686V186H684V185H681V184H679V183H676V182H671V181H665V180H637V181H631V182H623V183H616V184H607V185H565V186H556V187H549V188H544V189H541V190H538V191H535V192H532V193H529V194H526V195H523V196H521V197H518V198H515V199H512V200H509V201H506V202H502V203H498V204H466V203H457V202H445V201H430V200H415V199H400V198H386V197H375V196H365V195H356V194H347V193H339V192H331V191H323V190H316V189H309V188H302V187H295V186H288V185H280V184H272V183H264V182H256V181H248V180H239V179H231V178H222V177H214V176H205V175H196V174H187V173H178V172H168V171H157V170H144V169H132V168H119V167H105V166H89V165H72V164H52Z" fill="#0000c0"/>
<path d="M52 181H58V182H68V183H79V184H91V185H105V186H120V187H138V188H158V189H178V190H240V191H262V192H282V193H297V194H311V195H324V196H338V197H349V198H360V199H372V200H391V201H422V202H433V203H440V204H448V205H457V206H468V207H487V208H506V207H514V206H521V205H532V204H589V205H596V206H620V205H624V204H627V203H629V202H632V201H635V200H640V199H644V198H650V197H674V198H678V199H681V200H683V201H686V202H687V203H689V204H691V205H692V206H694V207H695V208H697V209H698V210H699V211H700V212H702V213H703V214H704V215H705V216H706V217H707V218H708V219H709V220H710V221H711V222H712V223H714V224H715V225H717V226H719V227H721V228H726V229H753V230H755V231H756V232H757V233H759V234H760V235H761V236H763V237H764V238H765V239H766V240H767V241H768V242H769V243H770V244H772V245H773V246H776V247H780V248H786V247H788V246H790V245H791V244H792V243H793V242H794V241H795V240H796V239H797V238H798V237H799V236H800V235H801V234H802V233H803V232H805V231H806V230H807V229H809V228H810V227H812V226H814V225H816V224H819V223H842V224H847V225H851V226H854V227H857V228H861V229H864V230H867V231H870V232H873V233H876V234H879V235H883V236H892V235H897V234H902V233H909V234H912V235H913V236H914V237H916V238H917V239H918V240H919V241H920V242H922V243H923V244H924V245H925V246H926V247H927V248H928V249H929V250H930V251H931V252H932V253H935V254H942V253H945V252H946V251H947V250H949V249H950V248H951V247H954V246H956V247H966V248H972V247H975V246H978V245H980V244H982V243H984V242H987V241H989V240H991V239H993V238H1002V239H1003V240H1004V241H1006V242H1007V243H1008V244H1009V245H1010V246H1011V247H1012V248H1014V249H1023V250H1032V251H1034V252H1036V253H1037V254H1038V255H1040V256H1041V257H1042V258H1044V259H1045V260H1046V261H1047V262H1048V263H1049V264H1050V265H1051V266H1052V267H1053V268H1054V269H1055V270H1056V271H1057V272H1058V273H1059V274H1060V275H1061V276H1062V277H1064V278H1065V279H1072V278H1076V277H1080V276H1082V275H1085V274H1088V273H1090V272H1092V271H1094V270H1095V269H1096V268H1097V267H1099V266H1100V265H1101V264H1103V263H1110V264H1111V265H1112V266H1113V268H1114V269H1115V271H1116V272H1117V274H1118V276H1119V277H1120V279H1121V280H1122V281H1123V282H1125V283H1131V284H1137V285H1140V286H1142V287H1144V288H1147V287H1149V286H1150V285H1151V284H1152V283H1153V282H1154V281H1155V280H1156V279H1157V278H1158V277H1160V276H1166V277H1170V278H1173V279H1177V280H1181V279H1184V278H1187V277H1189V276H1192V275H1200V276H1202V277H1203V278H1204V279H1205V280H1207V281H1208V282H1209V283H1210V284H1211V285H1212V286H1213V287H1215V288H1216V289H1218V290H1224V289H1231V288H1240V287H1257V288H1258V289H1259V291H1260V293H1261V296H1262V298H1263V300H1264V302H1265V304H1266V305H1267V306H1268V307H1269V308H1270V309H1271V310H1272V311H1274V312H1275V313H1276V314H1277V315H1278V316H1279V317H1280V318H1281V320H1282V321H1283V322H1284V324H1285V325H1286V326H1287V327H1288V328H1289V329H1291V330H1292V329H1295V328H1297V327H1298V326H1300V325H1301V324H1303V323H1304V322H1306V321H1308V320H1318V321H1330V320H1332V319H1334V318H1337V317H1339V316H1342V315H1350V316H1352V317H1354V318H1356V319H1358V320H1360V321H1362V322H1364V323H1390V324H1391V325H1392V326H1393V327H1394V328H1395V329H1396V330H1397V332H1398V333H1399V334H1400V335H1401V337H1402V339H1403V340H1404V342H1405V343H1406V344H1407V345H1408V346H1409V347H1411V346H1412V345H1413V344H1414V342H1415V340H1416V338H1417V336H1418V335H1419V333H1420V331H1421V330H1422V329H1423V328H1428V329H1430V330H1431V331H1433V332H1434V333H1435V334H1436V335H1437V336H1438V337H1439V338H1440V339H1441V340H1442V341H1443V342H1444V343H1445V344H1446V345H1447V346H1448V347H1449V348H1450V349H1451V350H1453V351H1455V350H1457V349H1458V348H1459V347H1460V346H1461V345H1463V344H1467V345H1468V347H1469V349H1470V351H1471V354H1472V356H1473V359H1474V362H1475V364H1476V366H1477V368H1478V369H1480V368H1481V367H1482V366H1483V364H1484V363H1485V361H1486V360H1487V358H1488V357H1490V356H1492V357H1495V358H1496V359H1498V360H1499V361H1500V362H1501V363H1503V364H1507V363H1509V362H1511V361H1512V360H1513V359H1514V358H1515V357H1516V356H1517V355H1519V354H1520V353H1521V352H1523V351H1526V350H1531V349H1537V348H1540V347H1542V346H1544V345H1546V344H1547V343H1548V342H1549V341H1550V340H1552V339H1553V338H1554V337H1555V336H1556V335H1557V334H1559V333H1560V332H1561V331H1562V330H1563V329H1564V328H1565V326H1566V325H1567V322H1568V320H1569V318H1571V320H1570V322H1569V324H1568V327H1567V328H1566V330H1565V331H1564V332H1563V333H1562V334H1561V335H1560V336H1558V337H1557V338H1556V339H1555V340H1554V341H1553V342H1551V343H1550V344H1549V345H1548V346H1547V347H1545V348H1543V349H1541V350H1538V351H1532V352H1527V353H1524V354H1522V355H1521V356H1520V357H1518V358H1517V359H1516V360H1515V361H1514V362H1513V363H1512V364H1510V365H1508V366H1502V365H1500V364H1499V363H1498V362H1497V361H1495V360H1494V359H1489V360H1488V362H1487V363H1486V365H1485V366H1484V368H1483V369H1482V370H1481V371H1477V370H1476V368H1475V366H1474V364H1473V361H1472V358H1471V356H1470V353H1469V351H1468V349H1467V347H1466V346H1464V347H1462V348H1461V349H1460V350H1459V351H1458V352H1456V353H1452V352H1450V351H1449V350H1448V349H1447V348H1446V347H1445V346H1444V345H1443V344H1442V343H1441V342H1440V341H1439V340H1438V339H1437V338H1436V337H1435V336H1434V335H1433V334H1432V333H1430V332H1429V331H1427V330H1424V331H1423V332H1422V333H1421V335H1420V337H1419V338H1418V340H1417V342H1416V344H1415V346H1414V347H1413V348H1412V349H1408V348H1407V347H1406V346H1405V345H1404V344H1403V342H1402V341H1401V339H1400V337H1399V336H1398V335H1397V334H1396V332H1395V331H1394V330H1393V329H1392V328H1391V327H1390V326H1389V325H1363V324H1361V323H1359V322H1357V321H1355V320H1353V319H1351V318H1349V317H1343V318H1340V319H1338V320H1335V321H1333V322H1331V323H1326V324H1324V323H1317V322H1309V323H1307V324H1305V325H1304V326H1302V327H1301V328H1299V329H1298V330H1296V331H1293V332H1290V331H1288V330H1287V329H1286V328H1285V327H1284V326H1283V324H1282V323H1281V322H1280V320H1279V319H1278V318H1277V317H1276V316H1275V315H1274V314H1273V313H1271V312H1270V311H1269V310H1268V309H1267V308H1266V307H1265V306H1264V304H1263V302H1262V300H1261V298H1260V295H1259V293H1258V291H1257V290H1256V289H1241V290H1232V291H1225V292H1217V291H1215V290H1214V289H1212V288H1211V287H1210V286H1209V285H1208V284H1207V283H1206V282H1204V281H1203V280H1202V279H1201V278H1199V277H1193V278H1190V279H1188V280H1185V281H1182V282H1176V281H1172V280H1169V279H1165V278H1161V279H1159V280H1158V281H1157V282H1156V283H1155V284H1154V285H1153V286H1152V287H1151V288H1150V289H1148V290H1143V289H1141V288H1139V287H1136V286H1130V285H1124V284H1122V283H1121V282H1120V281H1119V279H1118V278H1117V276H1116V274H1115V273H1114V271H1113V270H1112V268H1111V267H1110V266H1109V265H1104V266H1102V267H1101V268H1100V269H1098V270H1097V271H1096V272H1095V273H1093V274H1091V275H1089V276H1086V277H1083V278H1081V279H1077V280H1073V281H1064V280H1063V279H1061V278H1060V277H1059V276H1058V275H1057V274H1056V273H1055V272H1054V271H1053V270H1052V269H1051V268H1050V267H1049V266H1048V265H1047V264H1046V263H1045V262H1044V261H1043V260H1041V259H1040V258H1039V257H1037V256H1036V255H1035V254H1033V253H1031V252H1022V251H1013V250H1011V249H1010V248H1009V247H1008V246H1007V245H1006V244H1005V243H1003V242H1002V241H1001V240H994V241H992V242H990V243H988V244H985V245H983V246H981V247H979V248H976V249H973V250H965V249H952V250H951V251H950V252H948V253H947V254H946V255H943V256H934V255H931V254H930V253H929V252H928V251H927V250H926V249H925V248H924V247H923V246H922V245H921V244H919V243H918V242H917V241H916V240H915V239H913V238H912V237H911V236H908V235H903V236H898V237H893V238H882V237H878V236H875V235H872V234H869V233H866V232H863V231H860V230H856V229H853V228H850V227H846V226H841V225H820V226H817V227H815V228H813V229H811V230H810V231H808V232H807V233H806V234H804V235H803V236H802V237H801V238H800V239H799V240H798V241H797V242H796V243H795V244H794V245H793V246H792V247H791V248H789V249H787V250H779V249H775V248H772V247H771V246H769V245H768V244H767V243H766V242H765V241H764V240H763V239H762V238H760V237H759V236H758V235H756V234H755V233H754V232H752V231H725V230H720V229H718V228H716V227H714V226H713V225H711V224H710V223H709V222H708V221H707V220H706V219H705V218H704V217H703V216H702V215H701V214H699V213H698V212H697V211H696V210H694V209H693V208H691V207H690V206H688V205H686V204H685V203H682V202H680V201H677V200H673V199H651V200H645V201H641V202H636V203H633V204H630V205H628V206H625V207H621V208H595V207H588V206H533V207H522V208H515V209H507V210H486V209H467V208H456V207H447V206H439V205H432V204H421V203H390V202H371V201H359V200H348V199H337V198H323V197H310V196H296V195H281V194H261V193H239V192H177V191H157V190H137V189H119V188H104V187H90V186H78V185H67V184H57V183H52Z" fill="#0000c0"/>
<path d="M52 121H54V122H56V123H59V124H61V125H64V126H67V127H69V128H72V129H74V130H77V131H80V132H82V133H85V134H88V135H90V136H93V137H96V138H98V139H101V140H103V141H106V142H109V143H112V144H114V145H118V146H121V147H124V148H127V149H131V150H134V151H138V152H142V153H145V154H149V155H154V156H158V157H163V158H167V159H172V160H178V161H183V162H190V163H196V164H205V165H216V166H271V165H282V164H292V163H300V162H308V161H316V160H325V159H340V160H344V161H360V160H364V159H368V158H377V159H380V160H383V161H385V162H388V163H390V164H393V165H396V166H400V165H403V164H406V163H408V162H412V161H415V160H418V159H422V158H429V159H434V160H438V161H442V162H451V161H454V160H457V159H460V158H463V157H469V156H471V157H478V158H482V159H487V160H492V159H496V158H499V157H501V156H504V155H509V154H511V155H517V156H520V157H524V158H529V157H533V156H535V155H537V154H540V153H543V152H553V153H566V152H569V151H571V150H574V149H578V148H585V149H590V150H594V149H597V148H599V147H601V146H604V145H606V144H609V143H618V144H627V143H630V142H632V141H634V140H637V139H654V138H657V137H661V136H683V135H696V136H701V137H704V138H708V139H711V140H713V141H715V142H717V143H719V144H721V145H723V146H726V147H732V148H739V149H742V150H746V151H750V152H765V153H771V154H778V155H783V154H792V153H799V152H805V151H809V150H812V149H815V148H818V147H821V146H824V145H828V144H840V145H844V146H847V147H850V148H854V149H857V150H860V151H863V152H866V153H872V154H881V153H883V152H884V151H885V150H886V149H887V147H888V146H889V145H890V143H891V142H893V141H901V142H905V143H908V144H911V145H914V146H917V147H920V148H922V149H924V150H926V151H928V152H930V153H931V154H933V155H935V156H937V157H939V158H942V159H959V158H961V159H967V160H970V161H973V162H975V163H978V164H983V165H988V166H1009V167H1012V168H1025V167H1031V166H1041V167H1044V168H1046V169H1049V170H1050V171H1052V172H1053V173H1054V174H1055V175H1056V176H1057V177H1058V178H1060V179H1061V180H1063V181H1065V182H1067V183H1070V184H1072V185H1075V186H1081V187H1106V188H1119V189H1121V190H1123V191H1124V192H1126V193H1128V194H1129V195H1142V194H1171V195H1173V196H1176V197H1178V198H1188V197H1191V196H1194V195H1196V194H1200V193H1206V192H1213V191H1227V192H1232V193H1244V192H1255V191H1257V190H1258V189H1259V188H1260V187H1261V186H1262V185H1263V184H1264V183H1265V182H1267V181H1268V180H1270V179H1271V178H1273V177H1275V176H1283V177H1284V178H1286V179H1287V180H1289V181H1290V182H1292V183H1294V184H1296V185H1298V186H1300V187H1302V188H1305V189H1308V190H1312V191H1326V190H1329V189H1333V188H1339V189H1342V190H1343V191H1344V192H1346V193H1347V194H1348V195H1349V196H1350V197H1352V198H1358V197H1360V196H1361V195H1363V194H1364V193H1366V192H1377V193H1381V194H1384V195H1388V196H1391V197H1394V198H1398V199H1402V200H1417V199H1440V200H1445V201H1464V200H1473V201H1476V202H1478V203H1480V204H1482V205H1484V206H1486V207H1489V208H1493V207H1499V206H1513V205H1521V204H1525V203H1528V202H1531V201H1533V200H1536V199H1538V198H1540V197H1542V196H1549V197H1552V198H1554V199H1557V200H1561V199H1563V198H1565V197H1566V196H1567V195H1568V193H1569V192H1571V194H1570V195H1569V197H1568V198H1567V199H1566V200H1564V201H1562V202H1556V201H1553V200H1551V199H1548V198H1543V199H1541V200H1539V201H1537V202H1534V203H1532V204H1529V205H1526V206H1522V207H1514V208H1500V209H1494V210H1488V209H1485V208H1483V207H1481V206H1479V205H1477V204H1475V203H1472V202H1465V203H1453V204H1451V203H1444V202H1439V201H1418V202H1401V201H1397V200H1393V199H1390V198H1387V197H1383V196H1380V195H1376V194H1367V195H1365V196H1364V197H1362V198H1361V199H1359V200H1351V199H1349V198H1348V197H1347V196H1346V195H1345V194H1343V193H1342V192H1341V191H1338V190H1334V191H1330V192H1327V193H1321V194H1319V193H1311V192H1307V191H1304V190H1301V189H1299V188H1297V187H1295V186H1293V185H1291V184H1289V183H1288V182H1286V181H1285V180H1283V179H1282V178H1276V179H1274V180H1272V181H1271V182H1269V183H1268V184H1266V185H1265V186H1264V187H1263V188H1262V189H1261V190H1260V191H1259V192H1258V193H1256V194H1245V195H1231V194H1226V193H1214V194H1207V195H1201V196H1197V197H1195V198H1192V199H1189V200H1177V199H1175V198H1172V197H1170V196H1143V197H1128V196H1127V195H1125V194H1123V193H1122V192H1120V191H1118V190H1105V189H1080V188H1074V187H1071V186H1069V185H1066V184H1064V183H1062V182H1060V181H1059V180H1057V179H1056V178H1055V177H1054V176H1053V175H1052V174H1051V173H1049V172H1048V171H1045V170H1043V169H1040V168H1032V169H1026V170H1011V169H1008V168H987V167H982V166H977V165H974V164H972V163H969V162H966V161H941V160H938V159H936V158H934V157H932V156H930V155H929V154H927V153H925V152H923V151H921V150H919V149H916V148H913V147H910V146H907V145H904V144H900V143H894V144H892V145H891V147H890V148H889V149H888V151H887V152H886V153H885V154H884V155H882V156H871V155H865V154H862V153H859V152H856V151H853V150H849V149H846V148H843V147H839V146H829V147H825V148H822V149H819V150H816V151H813V152H810V153H806V154H800V155H793V156H784V157H777V156H770V155H764V154H749V153H745V152H741V151H738V150H731V149H725V148H722V147H720V146H718V145H716V144H714V143H712V142H710V141H707V140H703V139H700V138H695V137H684V138H662V139H658V140H655V141H638V142H635V143H633V144H631V145H628V146H617V145H610V146H607V147H605V148H602V149H600V150H598V151H595V152H589V151H584V150H579V151H575V152H572V153H570V154H567V155H561V156H559V155H552V154H544V155H541V156H538V157H536V158H534V159H530V160H523V159H519V158H516V157H505V158H502V159H500V160H497V161H493V162H486V161H481V160H477V159H464V160H461V161H458V162H455V163H452V164H441V163H437V162H433V161H428V160H423V161H419V162H416V163H413V164H409V165H407V166H404V167H401V168H395V167H392V166H389V165H387V164H384V163H382V162H379V161H376V160H369V161H365V162H361V163H343V162H339V161H326V162H317V163H309V164H301V165H293V166H283V167H272V168H215V167H204V166H195V165H189V164H182V163H177V162H171V161H166V160H162V159H157V158H153V157H148V156H144V155H141V154H137V153H133V152H130V151H126V150H123V149H120V148H117V147H113V146H111V145H108V144H105V143H102V142H100V141H97V140H95V139H92V138H89V137H87V136H84V135H81V134H79V133H76V132H73V131H71V130H68V129H66V128H63V127H60V126H58V125H55V124H53V123H52Z" fill="#800000"/>
<path d="M45 40.5H51M48 45.5H51M48 49.5H51M48 54.5H51M48 58.5H51M48 63.5H51M48 68.5H51M48 72.5H51M48 77.5H51M48 82.5H51M45 86.5H51M48 91.5H51M48 95.5H51M48 100.5H51M48 105.5H51M48 109.5H51M48 114.5H51M48 118.5H51M48 123.5H51M48 128.5H51M45 132.5H51M48 137.5H51M48 141.5H51M48 146.5H51M48 151.5H51M48 155.5H51M48 160.5H51M48 165.5H51M48 169.5H51M48 174.5H51M45 178.5H51M48 183.5H51M48 188.5H51M48 192.5H51M48 197.5H51M48 201.5H51M48 206.5H51M48 211.5H51M48 215.5H51M48 220.5H51M45 224.5H51M48 229.5H51M48 234.5H51M48 238.5H51M48 243.5H51M48 248.5H51M48 252.5H51M48 257.5H51M48 261.5H51M48 266.5H51M45 271.5H51M48 275.5H51M48 280.5H51M48 284.5H51M48 289.5H51M48 294.5H51M48 298.5H51M48 303.5H51M48 307.5H51M48 312.5H51M45 317.5H51M48 321.5H51M48 326.5H51M48 331.5H51M48 335.5H51M48 340.5H51M48 344.5H51M48 349.5H51M48 354.5H51M48 358.5H51M45 363.5H51M48 367.5H51M48 372.5H51M48 377.5H51M48 381.5H51M48 386.5H51M48 390.5H51M48 395.5H51M48 400.5H51M48 404.5H51M45 409.5H51M48 414.5H51M48 418.5H51M48 423.5H51M48 427.5H51M48 432.5H51M48 437.5H51M48 441.5H51M48 446.5H51M48 450.5H51M45 455.5H51M48 460.5H51M48 464.5H51M48 469.5H51M48 473.5H51M48 478.5H51M48 483.5H51M48 487.5H51M48 492.5H51M48 497.5H51M45 501.5H51M72.5 503V507M117.5 503V507M157.5 503V511M423.5 503V511M578.5 503V507M688.5 503V511M774.5 503V507M844.5 503V507M903.5 503V507M954.5 503V507M999.5 503V507M1039.5 503V511M1305.5 503V511M1460.5 503V507M1570.5 503V511" stroke="#000" stroke-width="1" fill="none"/>
</svg>
<div class="ylab" style="top:34px">10</div>
<div class="ylab" style="top:80px">5</div>
<div class="ylab" style="top:126px">0</div>
<div class="ylab" style="top:172px">-5</div>
<div class="ylab" style="top:218px">-10</div>
<div class="ylab" style="top:265px">-15</div>
<div class="ylab" style="top:311px">-20</div>
<div class="ylab" style="top:357px">-25</div>
<div class="ylab" style="top:403px">-30</div>
<div class="ylab" style="top:449px">-35</div>
<div class="ylab" style="top:495px">-40</div>
<div class="xlab" style="left:157px">500</div>
<div class="xlab" style="left:423px">1K</div>
<div class="xlab" style="left:688px">2K</div>
<div class="xlab" style="left:1039px">5K</div>
<div class="xlab" style="left:1305px">10K</div>
<div class="t" style="left:1574px;top:513px;font-size:12px">Hz</div>
<div class="t" style="left:21px;top:513px;font-size:12px;font-weight:bold;color:#0000c0">dBV</div>
<div class="t" style="left:1535px;top:45px;font-family:'Liberation Serif',serif;font-weight:bold;font-size:16px;line-height:18px;text-shadow:2px 2px 0 #b8b8b8">ACap</div>
<div class="abs" style="left:11px;top:529px;width:1582px;height:21px;background:#f0f0f0"></div>
<div class="abs" style="left:11px;top:528px;width:1582px;height:1px;background:#8c8c8c"></div>
<div class="abs" style="left:11px;top:529px;width:1582px;height:1px;background:#fff"></div>
<div class="abs" style="left:11px;top:549px;width:1582px;height:1px;background:#fff"></div>
<div class="abs" style="left:1592px;top:31px;width:1px;height:498px;background:#a0a0a0"></div>
<div class="t ms" style="left:12px;top:533px">Sel #</div>
<div class="t ms" style="left:49px;top:533px">Show</div>
<div class="t ms" style="left:125px;top:533px">Curve title</div>
<div class="t ms" style="left:282px;top:533px">Operate on</div>
<div class="t ms" style="left:434px;top:534px">Mag</div>
<div class="t ms" style="left:477px;top:534px">Phase</div>
<div class="t ms" style="left:531px;top:534px">GD</div>
<div class="chk" style="left:416px;top:532px"><svg width="9" height="9" viewBox="0 0 9 9" style="position:absolute;left:1px;top:1px" shape-rendering="crispEdges"><path d="M1 3v3l2 2 5-5V0L3 5z" fill="#000"/></svg></div>
<div class="chk" style="left:459px;top:532px"></div>
<div class="chk" style="left:513px;top:532px"></div>
<div class="btn" style="left:572px;top:532px;width:47px;height:17px"><span>Smooth</span></div>
<div class="btn" style="left:623px;top:532px;width:48px;height:17px"><span>Norm.</span></div>
<div class="abs" style="left:11px;top:550px;width:1582px;height:2px;background:linear-gradient(#a0a0a0 0,#a0a0a0 1px,#696969 1px)"></div>
<svg class="abs" style="left:16px;top:558px" width="13" height="14" viewBox="0 0 13 14"><circle cx="6.5" cy="7" r="5" fill="#fff"/><path d="M2.6 10.9A5.5 5.5 0 0 1 10.4 3.1" fill="none" stroke="#a0a0a0" stroke-width="1"/><path d="M3.3 10.2A4.5 4.5 0 0 1 9.7 3.8" fill="none" stroke="#696969" stroke-width="1"/><path d="M10.4 3.1A5.5 5.5 0 0 1 2.6 10.9" fill="none" stroke="#fff" stroke-width="1"/><path d="M9.7 3.8A4.5 4.5 0 0 1 3.3 10.2" fill="none" stroke="#e3e3e3" stroke-width="1"/><circle cx="6.5" cy="7" r="2" fill="#000"/></svg>
<div class="t ms" style="left:34px;top:560px">1</div>
<div class="chk" style="left:56px;top:559px"><svg width="9" height="9" viewBox="0 0 9 9" style="position:absolute;left:1px;top:1px" shape-rendering="crispEdges"><path d="M1 3v3l2 2 5-5V0L3 5z" fill="#000"/></svg></div>
<div class="btn" style="left:73px;top:555px;width:24px;height:21px"><svg width="16" height="17" viewBox="0 0 16 17" style="position:absolute;left:3px;top:1px"><path d="M0 0L16 8.5L0 17z" fill="#a0a0a0"/></svg></div>
<div class="btn" style="left:98px;top:555px;width:24px;height:21px"><svg width="16" height="15" viewBox="0 0 16 15" style="position:absolute;left:4px;top:2px"><path d="M1.5 0.5L15 14M14 1.5L1 14" stroke="#ff0000" stroke-width="2.4" fill="none"/></svg></div>
<div class="edit" style="left:125px;top:554px;width:173px;height:22px"><div class="t ms" style="left:2px;top:3px">relativt on axis 10 grader ej fasad</div></div>
<div class="chk" style="left:304px;top:559px"></div>
<div class="edit" style="left:322px;top:554px;width:94px;height:20px"><div class="t ms" style="left:6px;top:4px">Solid</div><div class="btn" style="left:75px;top:1px;width:17px;height:16px"><svg width="7" height="4" viewBox="0 0 7 4" style="position:absolute;left:4px;top:5px" shape-rendering="crispEdges"><path d="M0 0h7L3.5 4z" fill="#000"/></svg></div></div>
<div class="cb" style="left:419px;top:555px;background:#0000c0"><span>MAG</span></div>
<div class="cb" style="left:449px;top:555px;background:#ff8000"><span>PH</span></div>
<div class="cb" style="left:479px;top:555px;background:#c000c0"><span>G-D</span></div>
<svg class="abs" style="left:16px;top:584px" width="13" height="14" viewBox="0 0 13 14"><circle cx="6.5" cy="7" r="5" fill="#fff"/><path d="M2.6 10.9A5.5 5.5 0 0 1 10.4 3.1" fill="none" stroke="#a0a0a0" stroke-width="1"/><path d="M3.3 10.2A4.5 4.5 0 0 1 9.7 3.8" fill="none" stroke="#696969" stroke-width="1"/><path d="M10.4 3.1A5.5 5.5 0 0 1 2.6 10.9" fill="none" stroke="#fff" stroke-width="1"/><path d="M9.7 3.8A4.5 4.5 0 0 1 3.3 10.2" fill="none" stroke="#e3e3e3" stroke-width="1"/></svg>
<div class="t ms" style="left:34px;top:586px">2</div>
<div class="chk" style="left:56px;top:585px"><svg width="9" height="9" viewBox="0 0 9 9" style="position:absolute;left:1px;top:1px" shape-rendering="crispEdges"><path d="M1 3v3l2 2 5-5V0L3 5z" fill="#000"/></svg></div>
<div class="btn" style="left:73px;top:581px;width:24px;height:21px"><svg width="16" height="17" viewBox="0 0 16 17" style="position:absolute;left:3px;top:1px"><path d="M0 0L16 8.5L0 17z" fill="#a0a0a0"/></svg></div>
<div class="btn" style="left:98px;top:581px;width:24px;height:21px"><svg width="16" height="15" viewBox="0 0 16 15" style="position:absolute;left:4px;top:2px"><path d="M1.5 0.5L15 14M14 1.5L1 14" stroke="#ff0000" stroke-width="2.4" fill="none"/></svg></div>
<div class="edit" style="left:125px;top:580px;width:173px;height:22px"><div class="t ms" style="left:2px;top:3px">relativt on axis 20 grader ej fasad</div></div>
<div class="chk" style="left:304px;top:585px"></div>
<div class="edit" style="left:322px;top:580px;width:94px;height:20px"><div class="t ms" style="left:6px;top:4px">Solid</div><div class="btn" style="left:75px;top:1px;width:17px;height:16px"><svg width="7" height="4" viewBox="0 0 7 4" style="position:absolute;left:4px;top:5px" shape-rendering="crispEdges"><path d="M0 0h7L3.5 4z" fill="#000"/></svg></div></div>
<div class="cb" style="left:419px;top:581px;background:#ff0080"><span>MAG</span></div>
<div class="cb" style="left:449px;top:581px;background:#808080"><span>PH</span></div>
<div class="cb" style="left:479px;top:581px;background:#8080ff"><span>G-D</span></div>
<svg class="abs" style="left:16px;top:610px" width="13" height="14" viewBox="0 0 13 14"><circle cx="6.5" cy="7" r="5" fill="#fff"/><path d="M2.6 10.9A5.5 5.5 0 0 1 10.4 3.1" fill="none" stroke="#a0a0a0" stroke-width="1"/><path d="M3.3 10.2A4.5 4.5 0 0 1 9.7 3.8" fill="none" stroke="#696969" stroke-width="1"/><path d="M10.4 3.1A5.5 5.5 0 0 1 2.6 10.9" fill="none" stroke="#fff" stroke-width="1"/><path d="M9.7 3.8A4.5 4.5 0 0 1 3.3 10.2" fill="none" stroke="#e3e3e3" stroke-width="1"/></svg>
<div class="t ms" style="left:34px;top:612px">3</div>
<div class="chk" style="left:56px;top:611px"><svg width="9" height="9" viewBox="0 0 9 9" style="position:absolute;left:1px;top:1px" shape-rendering="crispEdges"><path d="M1 3v3l2 2 5-5V0L3 5z" fill="#000"/></svg></div>
<div class="btn" style="left:73px;top:607px;width:24px;height:21px"><svg width="16" height="17" viewBox="0 0 16 17" style="position:absolute;left:3px;top:1px"><path d="M0 0L16 8.5L0 17z" fill="#a0a0a0"/></svg></div>
<div class="btn" style="left:98px;top:607px;width:24px;height:21px"><svg width="16" height="15" viewBox="0 0 16 15" style="position:absolute;left:4px;top:2px"><path d="M1.5 0.5L15 14M14 1.5L1 14" stroke="#ff0000" stroke-width="2.4" fill="none"/></svg></div>
<div class="edit" style="left:125px;top:606px;width:173px;height:22px"><div class="t ms" style="left:2px;top:3px">relativt on axis 30 grader ej fasad</div></div>
<div class="chk" style="left:304px;top:611px"></div>
<div class="edit" style="left:322px;top:606px;width:94px;height:20px"><div class="t ms" style="left:6px;top:4px">Solid</div><div class="btn" style="left:75px;top:1px;width:17px;height:16px"><svg width="7" height="4" viewBox="0 0 7 4" style="position:absolute;left:4px;top:5px" shape-rendering="crispEdges"><path d="M0 0h7L3.5 4z" fill="#000"/></svg></div></div>
<div class="cb" style="left:419px;top:607px;background:#000000"><span>MAG</span></div>
<div class="cb" style="left:449px;top:607px;background:#c000c0"><span>PH</span></div>
<div class="cb" style="left:479px;top:607px;background:#00c0c0"><span>G-D</span></div>
<svg class="abs" style="left:16px;top:636px" width="13" height="14" viewBox="0 0 13 14"><circle cx="6.5" cy="7" r="5" fill="#fff"/><path d="M2.6 10.9A5.5 5.5 0 0 1 10.4 3.1" fill="none" stroke="#a0a0a0" stroke-width="1"/><path d="M3.3 10.2A4.5 4.5 0 0 1 9.7 3.8" fill="none" stroke="#696969" stroke-width="1"/><path d="M10.4 3.1A5.5 5.5 0 0 1 2.6 10.9" fill="none" stroke="#fff" stroke-width="1"/><path d="M9.7 3.8A4.5 4.5 0 0 1 3.3 10.2" fill="none" stroke="#e3e3e3" stroke-width="1"/></svg>
<div class="t ms" style="left:34px;top:638px">4</div>
<div class="chk" style="left:56px;top:637px"><svg width="9" height="9" viewBox="0 0 9 9" style="position:absolute;left:1px;top:1px" shape-rendering="crispEdges"><path d="M1 3v3l2 2 5-5V0L3 5z" fill="#000"/></svg></div>
<div class="btn" style="left:73px;top:633px;width:24px;height:21px"><svg width="16" height="17" viewBox="0 0 16 17" style="position:absolute;left:3px;top:1px"><path d="M0 0L16 8.5L0 17z" fill="#a0a0a0"/></svg></div>
<div class="btn" style="left:98px;top:633px;width:24px;height:21px"><svg width="16" height="15" viewBox="0 0 16 15" style="position:absolute;left:4px;top:2px"><path d="M1.5 0.5L15 14M14 1.5L1 14" stroke="#ff0000" stroke-width="2.4" fill="none"/></svg></div>
<div class="edit" style="left:125px;top:632px;width:173px;height:22px"><div class="t ms" style="left:2px;top:3px">relativt on axis 40 grader ej fasad</div></div>
<div class="chk" style="left:304px;top:637px"></div>
<div class="edit" style="left:322px;top:632px;width:94px;height:20px"><div class="t ms" style="left:6px;top:4px">Solid</div><div class="btn" style="left:75px;top:1px;width:17px;height:16px"><svg width="7" height="4" viewBox="0 0 7 4" style="position:absolute;left:4px;top:5px" shape-rendering="crispEdges"><path d="M0 0h7L3.5 4z" fill="#000"/></svg></div></div>
<div class="cb" style="left:419px;top:633px;background:#800080"><span>MAG</span></div>
<div class="cb" style="left:449px;top:633px;background:#808000"><span>PH</span></div>
<div class="cb" style="left:479px;top:633px;background:#0000ff"><span>G-D</span></div>
<div class="abs" style="left:1575px;top:552px;width:17px;height:104px;background:#f0f0f0;border-left:1px solid #fff"></div>
<div class="abs" style="left:1576px;top:569px;width:15px;height:31px;background:#cdcdcd"></div>
<svg class="abs" style="left:1578px;top:555px" width="11" height="12" viewBox="0 0 11 12"><path d="M2 8L5.5 4.5L9 8" fill="none" stroke="#484848" stroke-width="2"/></svg>
<svg class="abs" style="left:1578px;top:641px" width="11" height="12" viewBox="0 0 11 12"><path d="M2 5L5.5 8.5L9 5" fill="none" stroke="#484848" stroke-width="2"/></svg>
</body>
</html>
